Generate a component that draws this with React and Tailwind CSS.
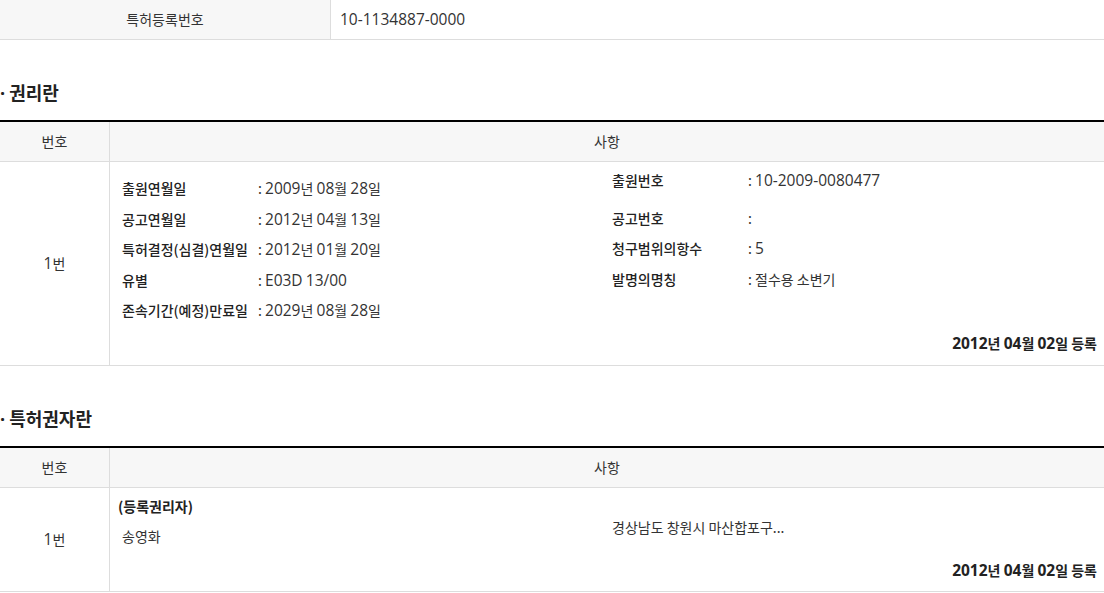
// Hangul stays in Noto Sans CJK; runs of latin letters and digits get a wider latin face, as on the source page
function Txt({ text, latin = "text-[15.5px]" }) {
  const parts = text.split(/([0-9A-Za-z\-\/]+)/);
  return parts.map((p, i) =>
    /[0-9A-Za-z]/.test(p) ? (
      <span key={i} className={`font-['Open_Sans',sans-serif] ${latin}`}>
        {p}
      </span>
    ) : (
      p
    )
  );
}

function InfoList({ items }) {
  return (
    <div>
      {items.map((it, i) => (
        <div key={i} className={`flex leading-[30.5px] ${it.cls || ""}`}>
          <span className="w-[136px] shrink-0 font-medium text-[#222]">{it.label}</span>
          <span className="text-[#333]">
            : <Txt text={it.value} />
          </span>
        </div>
      ))}
    </div>
  );
}

function SectionTitle({ children, className = "" }) {
  return (
    <h3 className={`text-[18px] font-bold text-[#222] leading-[18px] ${className}`}>
      <span className="font-['Open_Sans',sans-serif] mr-[4px]">·</span>
      {children}
    </h3>
  );
}

function TableHead() {
  return (
    <div className="flex h-[40px] bg-[#f7f7f7] border-b border-[#dddddd] text-[14px] text-[#333]">
      <div className="w-[110px] shrink-0 flex items-center justify-center border-r border-[#dddddd]">번호</div>
      <div className="flex-1 flex items-center justify-center">사항</div>
    </div>
  );
}

function RegDate({ className = "" }) {
  return (
    <div className={`mt-auto text-right font-bold text-[#222] ${className}`}>
      <Txt text="2012년 04월 02일 등록" />
    </div>
  );
}

export default function App() {
  const left = [
    { label: "출원연월일", value: "2009년 08월 28일" },
    { label: "공고연월일", value: "2012년 04월 13일" },
    { label: "특허결정(심결)연월일", value: "2012년 01월 20일" },
    { label: "유별", value: "E03D 13/00" },
    { label: "존속기간(예정)만료일", value: "2029년 08월 28일" },
  ];
  const right = [
    { label: "출원번호", value: "10-2009-0080477", cls: "mb-[7px]" },
    { label: "공고번호", value: "" },
    { label: "청구범위의항수", value: "5" },
    { label: "발명의명칭", value: "절수용 소변기" },
  ];

  return (
    <div className="w-[1104px] h-[593px] overflow-hidden bg-white text-[14px] font-['Noto_Sans_CJK_KR',sans-serif]">
      <div className="flex h-[40px] border-b border-[#dddddd] text-[#333]">
        <div className="w-[331px] shrink-0 flex items-center justify-center bg-[#f7f7f7] border-r border-[#dddddd]">
          특허등록번호
        </div>
        <div className="flex items-center pl-[9px]">
          <Txt text="10-1134887-0000" />
        </div>
      </div>

      <SectionTitle className="mt-[43px]">권리란</SectionTitle>
      <div className="mt-[18px] border-t-2 border-black">
        <TableHead />
        <div className="flex h-[204px] border-b border-[#dddddd]">
          <div className="w-[110px] shrink-0 flex items-center justify-center border-r border-[#dddddd] text-[#333]">
            <Txt text="1번" />
          </div>
          <div className="flex-1 flex flex-col pl-[12px] pr-[7px]">
            <div className="flex">
              <div className="w-[490px] shrink-0 pt-[11px]">
                <InfoList items={left} />
              </div>
              <div className="pt-[3px]">
                <InfoList items={right} />
              </div>
            </div>
            <RegDate className="mb-[10px]" />
          </div>
        </div>
      </div>

      <SectionTitle className="mt-[43px]">특허권자란</SectionTitle>
      <div className="mt-[18px] border-t-2 border-black">
        <TableHead />
        <div className="flex h-[104px] border-b border-[#dddddd]">
          <div className="w-[110px] shrink-0 flex items-center justify-center border-r border-[#dddddd] text-[#333]">
            <Txt text="1번" />
          </div>
          <div className="flex-1 flex flex-col pl-[8px] pr-[7px]">
            <div className="flex">
              <div className="w-[494px] shrink-0 pt-[6px]">
                <div className="font-bold text-[#222] leading-[24px]">(등록권리자)</div>
                <div className="pl-[4px] mt-[6px] leading-[24px] text-[#333]">송영화</div>
              </div>
              <div className="pt-[27px] leading-[24px] text-[#333]">경상남도 창원시 마산합포구...</div>
            </div>
            <RegDate className="mb-[9px]" />
          </div>
        </div>
      </div>
    </div>
  );
}
